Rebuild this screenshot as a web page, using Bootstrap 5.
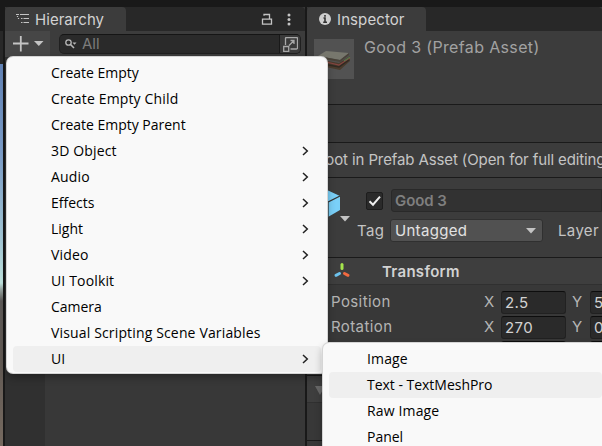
<!DOCTYPE html>
<html lang="en">
<head>
<meta charset="utf-8">
<meta name="viewport" content="width=device-width, initial-scale=1">
<title>Editor</title>
<link href="https://cdn.jsdelivr.net/npm/bootstrap@5.3.0/dist/css/bootstrap.min.css" rel="stylesheet">
<style>
body{width:602px;height:446px;background:#191919;color:#c4c4c4;font-family:Inter,"Liberation Sans",sans-serif;font-size:15px;line-height:20px}
svg{display:block;flex:none}
.top-gap{height:7px}
.scene{width:3px;margin-top:24px;background:linear-gradient(#282828 0 33px,#6485b8 33px,#7d9fcb 120px,#a7cbd9 210px,#c2e6e1 252px,#9caaa6 258px,#5d5a58 270px,#625a54 330px,#75695f)}
.hier{width:300px;margin-left:2px;background:#383838}
.insp{width:295px;margin-left:2px;background:#383838}
.tabs{height:24px;background:#282828;border-radius:4px 4px 0 0}
.tab{height:24px;background:#3c3c3c;border-radius:4px 4px 0 0;color:#d2d2d2}
.hier .tab{width:121px;padding-left:11px}
.insp .tab{width:119px;padding-left:12px}
.t-hier{margin:1px 0 0 5px;letter-spacing:.05px}
.t-insp{margin:1px 0 0 6px;letter-spacing:.1px}
.dots{margin:0 14px 0 14px}
.tools{height:26px;background:#3c3c3c}
.add{width:45px;height:26px;background:#464646;padding-left:8px}
.search{width:242px;height:20px;margin:3px 0 0 9px;background:#2a2a2a;border:1px solid #202020;border-top-color:#151515;border-radius:5px;color:#7c7c7c;overflow:hidden}
.search .pick{width:21px;height:20px;background:#3a3a3a;border-left:1px solid #191919}
.gutter{width:40px;background:#303030}
.asset{height:74px;background:#3c3c3c;border-bottom:1px solid #1a1a1a;padding:8px 0 0 7px}
.thumb{width:40px;height:40px;background:#525252}
.t-asset{margin:-2px 0 0 10px;color:#a2a2a2;font-size:16px;letter-spacing:.35px}
.blank{height:38px;border-bottom:1px solid #1a1a1a}
.root-row{height:35px;background:#3c3c3c;border-bottom:1px solid #1a1a1a;padding-left:9px;letter-spacing:-.11px}
.obj{height:80px;background:#3c3c3c;border-bottom:1px solid #1a1a1a}
.obj-icon{width:59px;padding:11px 0 0 9px}
.check{width:17px;height:18px;background:#2a2a2a;border:1px solid #1d1d1d;border-radius:2px}
.name-field{height:23px;width:211px;margin-left:8px;background:#323232;border:1px solid #292929;border-radius:3px 0 0 3px;padding:1px 0 0 3px;color:#7f7f7f;font-weight:600;letter-spacing:-.1px}
.l1{height:23px;margin-top:11px}
.l2{height:23px;margin-top:7px;letter-spacing:.35px}
.t-tag{width:32px;margin-left:-9px;margin-right:1px}
.pickbox{width:153px;height:23px;background:#515151;border:1px solid #303030;border-radius:3px;color:#e2e2e2;padding:0 6px 0 4px;letter-spacing:.3px}
.t-layer{margin-left:15px}
.comp{height:27px;background:#3e3e3e;border-bottom:1px solid #303030;padding-left:26px}
.t-trans{margin:1px 0 0 31px;font-weight:600;color:#d2d2d2;letter-spacing:.3px}
.vec{height:22px;margin-bottom:3px;padding-left:24px;letter-spacing:.4px;color:#b4b4b4}
.vec>*{flex:none}
.vec .lab{width:153px}
.vec .ax{width:17px}
.vec .num{width:65px;height:23px;background:#2a2a2a;border:1px solid #212121;border-top-color:#0d0d0d;border-radius:3px;padding:1px 0 0 3px;color:#d2d2d2;margin-right:6px}
.vec .num:last-child{margin-right:-60px;margin-left:1px}
.vecs{padding-top:6px;height:90px}
.low1{height:28px;border-top:1px solid #1a1a1a;border-bottom:1px solid #303030;background:#3e3e3e;padding:10px 0 0 8px}
.low2{height:38px;border-bottom:1px solid #1a1a1a}
.pop{background:#f9f9f9;color:#000;font-family:"Open Sans","Noto Sans",sans-serif;font-size:14px;line-height:26px;box-shadow:0 0 0 1px #d5d5d5,0 4px 9px #0005}
.pop-main{left:7px;top:57px;width:320px;height:316px;border-radius:6px;padding:3px 6px}
.pop-sub{left:323px;top:343px;width:279px;height:103px;border-radius:6px 0 0 0;padding:3px 0 0 6px}
.pop-sub .entry{margin-right:0}
.entry{height:26px;padding:0 12px 0 38px;border-radius:4px;letter-spacing:-.02px}
.entry.wide{letter-spacing:.15px}
.entry.on{background:#efefef}
</style>
<script src="https://cdn.jsdelivr.net/npm/bootstrap@5.3.0/dist/js/bootstrap.bundle.min.js"></script>
</head>
<body class="position-relative overflow-hidden m-0">
<svg width="0" height="0" class="position-absolute"><symbol id="chev" viewBox="0 0 7 10"><path d="M1 1l4.3 4L1 9" fill="none" stroke="#222" stroke-width="1.5"/></symbol></svg>
<div class="d-flex flex-column h-100">
  <div class="top-gap"></div>
  <div class="d-flex flex-grow-1">
    <div class="scene"></div>
    <section class="hier d-flex flex-column">
      <div class="tabs d-flex align-items-center">
        <div class="tab d-flex align-items-center">
          <svg width="14" height="12" viewBox="0 0 14 12" stroke="#c4c4c4" stroke-width="1.2" fill="none"><path d="M0 1.5h3M4 1.500h9M5 5.500h1.500M7.500 5.500H13M5 9.500h1.500M7.500 9.500H13M1.500 3v1M2.500 5v1"/></svg>
          <span class="t-hier">Hierarchy</span>
        </div>
        <svg class="ms-auto" width="12" height="13" viewBox="0 0 12 13" fill="none" stroke="#c4c4c4" stroke-width="1.3"><path d="M1.500 6.200h9v5h-9zM3 2.800V1.500h5.500v4.500"/></svg>
        <svg class="dots" width="4" height="13" viewBox="0 0 4 13" fill="#c4c4c4"><circle cx="2" cy="2" r="1.500"/><circle cx="2" cy="6.500" r="1.500"/><circle cx="2" cy="11" r="1.500"/></svg>
      </div>
      <div class="tools d-flex">
        <div class="add d-flex align-items-center">
          <svg width="31" height="16" viewBox="0 0 31 16"><path d="M7.800 0v15.500M0 7.500h15.500" stroke="#c4c4c4" stroke-width="1.800"/><path d="M21 5h9.500l-4.700 5z" fill="#c4c4c4"/></svg>
        </div>
        <div class="search d-flex align-items-center">
          <svg class="ms-1" width="14" height="12" viewBox="0 0 14 12"><circle cx="4.500" cy="4.500" r="2.700" fill="none" stroke="#b8b8b8" stroke-width="1.300"/><path d="M6.500 6.500l3.500 3.500" stroke="#b8b8b8" stroke-width="1.600"/><path d="M8.500 4.500h4l-2 2.300z" fill="#b8b8b8"/></svg>
          <span class="ms-1">All</span>
          <div class="pick ms-auto d-flex align-items-center justify-content-center"><svg width="15" height="15" viewBox="0 0 15 15" fill="none" stroke="#a8a8a8" stroke-width="1.300"><path d="M2.500 8V1.500q0-1 1-1h10q1 0 1 1v9.500q0 1-1 1H7.500M.700 9.500h5v5h-5zM6 8.500l5-5M7.500 3.500H11V7"/></svg></div>
        </div>
      </div>
      <div class="d-flex flex-grow-1"><div class="gutter"></div></div>
    </section>
    <section class="insp overflow-hidden">
      <div class="tabs"><div class="tab d-flex align-items-center">
        <svg width="12" height="12" viewBox="0 0 12 12"><circle cx="6" cy="6" r="6" fill="#cfcfcf"/><path d="M6 2v1.700M4.500 5H6v4M4.200 9.200h3.800" stroke="#333" stroke-width="1.600" fill="none"/></svg>
        <span class="t-insp">Inspector</span></div></div>
      <div class="asset d-flex">
        <div class="thumb"><svg width="40" height="40" viewBox="0 0 40 40"><path d="M3 20l22 4 11-7v5l-10 9L3 26z" fill="#4a3b2c"/><path d="M4 21l21 5 11-7" fill="none" stroke="#854440" stroke-width="1.200"/><path d="M4 24l21 4 10-7" fill="none" stroke="#302922" stroke-width="1.500"/><path d="M30 22l6-4" stroke="#56774a" stroke-width="1.200"/><path d="M4 17l8-5 23 2-9 7z" fill="#77776d"/><path d="M4 17l22 4 9-7v2l-9 7-22-4z" fill="#494238"/></svg></div>
        <span class="t-asset">Good 3 (Prefab Asset)</span>
      </div>
      <div class="blank"></div>
      <div class="root-row d-flex align-items-center text-nowrap">Root in Prefab Asset (Open for full editing</div>
      <div class="obj d-flex">
        <div class="obj-icon"><svg width="36" height="34" viewBox="0 0 36 34"><path d="M11 1l13 6v14l-12 7L0 21V7z" fill="#7ad0f8"/><path d="M0 7l12 6 12-6M12 13v15" stroke="#333" stroke-width="1.300" fill="none"/><path d="M24 27h10l-5 5.500z" fill="#c4c4c4"/></svg></div>
        <div class="flex-grow-1">
          <div class="l1 d-flex align-items-center"><div class="check"><svg width="15" height="16" viewBox="0 0 15 16"><path d="M2.500 8.200l3.500 3.500 7-8" stroke="#eee" stroke-width="2" fill="none"/></svg></div><div class="name-field d-flex align-items-center">Good 3</div></div>
          <div class="l2 d-flex align-items-center"><span class="t-tag">Tag</span><div class="pickbox d-flex align-items-center justify-content-between"><span>Untagged</span><svg width="10" height="6" viewBox="0 0 10 6"><path d="M0 0h10L5 5.500z" fill="#c4c4c4"/></svg></div><span class="t-layer">Layer</span></div>
        </div>
      </div>
      <div class="comp d-flex align-items-center"><svg width="18" height="18" viewBox="0 0 18 18" stroke-width="3" stroke-linecap="round"><path d="M9 2.500v4" stroke="#a5e54c"/><path d="M6.500 11.500L3 13.300" stroke="#6dc2ed"/><path d="M11.500 11.500l3.500 1.800" stroke="#f36a40"/></svg><span class="t-trans">Transform</span></div>
      <div class="vecs">
        <div class="vec d-flex align-items-center"><span class="lab">Position</span><span class="ax">X</span><div class="num">2.5</div><span class="ax">Y</span><div class="num">5</div></div>
        <div class="vec d-flex align-items-center"><span class="lab">Rotation</span><span class="ax">X</span><div class="num">270</div><span class="ax">Y</span><div class="num">0</div></div>
        <div class="vec d-flex align-items-center"><span class="lab"></span><span class="ax"></span><div class="num"></div><span class="ax"></span><div class="num"></div></div>
      </div>
      <div class="low1"><svg width="10" height="9" viewBox="0 0 10 9"><path d="M0 0h10L5 9z" fill="#686868"/></svg></div>
      <div class="low2"></div>
    </section>
  </div>
</div>
<div class="pop pop-main position-absolute">
  <div class="entry">Create Empty</div>
  <div class="entry wide">Create Empty Child</div>
  <div class="entry">Create Empty Parent</div>
  <div class="entry wide d-flex align-items-center justify-content-between">3D Object<svg width="7" height="10"><use href="#chev"/></svg></div>
  <div class="entry wide d-flex align-items-center justify-content-between">Audio<svg width="7" height="10"><use href="#chev"/></svg></div>
  <div class="entry d-flex align-items-center justify-content-between">Effects<svg width="7" height="10"><use href="#chev"/></svg></div>
  <div class="entry d-flex align-items-center justify-content-between">Light<svg width="7" height="10"><use href="#chev"/></svg></div>
  <div class="entry wide d-flex align-items-center justify-content-between">Video<svg width="7" height="10"><use href="#chev"/></svg></div>
  <div class="entry wide d-flex align-items-center justify-content-between">UI Toolkit<svg width="7" height="10"><use href="#chev"/></svg></div>
  <div class="entry">Camera</div>
  <div class="entry wide">Visual Scripting Scene Variables</div>
  <div class="entry on d-flex align-items-center justify-content-between">UI<svg width="7" height="10"><use href="#chev"/></svg></div>
</div>
<div class="pop pop-sub position-absolute">
  <div class="entry wide">Image</div>
  <div class="entry on">Text - TextMeshPro</div>
  <div class="entry wide">Raw Image</div>
  <div class="entry">Panel</div>
</div>
</body>
</html>
